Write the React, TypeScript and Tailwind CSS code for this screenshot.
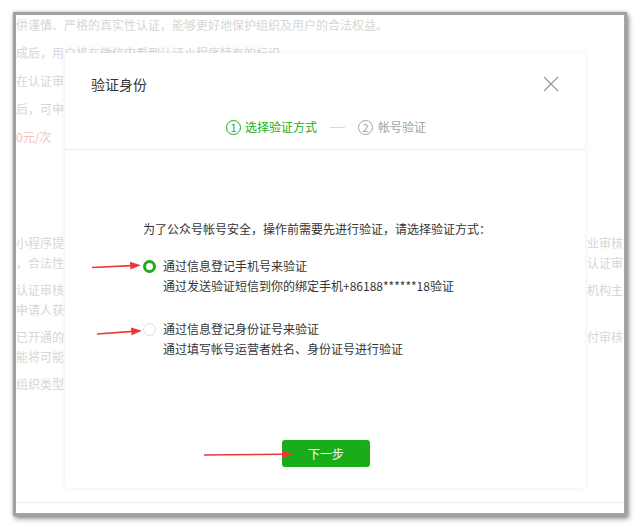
const faint = 'text-[#d6d6d6]'

function Radio({ checked }: { checked?: boolean }) {
  return checked ? (
    <span className="mt-[4px] box-border h-[13px] w-[13px] shrink-0 rounded-full border-[3px] border-[#1aad19] bg-white" />
  ) : (
    <span className="mt-[4px] box-border h-[13px] w-[13px] shrink-0 rounded-full border border-[#dcdcdc] bg-white" />
  )
}

function Arrows() {
  return (
    <svg className="pointer-events-none absolute left-0 top-0" width="640" height="527" viewBox="0 0 640 527">
      <g fill="#e8393a" stroke="#e8393a">
        <line x1="92" y1="267.5" x2="132" y2="265.6" strokeWidth="1.6" />
        <polygon points="141,265.2 130,261.8 130.4,269.4" stroke="none" />
        <line x1="97" y1="334" x2="133" y2="331.4" strokeWidth="1.6" />
        <polygon points="142,330.8 131,327.6 131.5,335.2" stroke="none" />
        <line x1="204" y1="455" x2="283" y2="454.3" strokeWidth="1.6" />
        <polygon points="293,454.2 282,450.4 282,458" stroke="none" />
      </g>
    </svg>
  )
}

export default function App() {
  return (
    <div className="relative h-[527px] w-[640px] overflow-hidden bg-white font-['Noto_Sans_CJK_SC',sans-serif] text-[12px]">
      <div className="ml-[13px] mt-[12px] h-[504px] w-[614px] border-[3px] border-[#a2a2a2] shadow-[0_0_3px_rgba(0,0,0,0.25),2px_3px_5px_rgba(0,0,0,0.4)]">
        <div className="relative h-full w-full overflow-hidden bg-white">
          {/* page behind the dialog */}
          <div className={`-mt-[4px] whitespace-nowrap ${faint}`}>
            <div className="h-[28px] leading-[28px]">供谨慎、严格的真实性认证，能够更好地保护组织及用户的合法权益。</div>
            <div className="h-[28px] leading-[28px]">成后，用户将在微信中看到认证小程序特有的标识。</div>
            <div className="h-[28px] leading-[28px]">在认证审核通过后，小程序将获得认证标识</div>
            <div className="h-[28px] leading-[28px]">后，可申请年审</div>
            <div className="h-[28px] leading-[28px] text-[#f4c2c2]">0元/次</div>
          </div>
          <div className={`mt-[82px] whitespace-nowrap ${faint}`}>
            {[
              ['小程序提供真实性、合法性认证', '业审核'],
              ['，合法性认证', '认证审'],
              ['认证审核机构主体', '机构主'],
              ['申请人获得认证', ''],
              ['已开通的支付审核', '付审核'],
              ['能将可能', ''],
              ['组织类型', ''],
            ].map(([l, r], i) => (
              <div key={i} className={`flex h-[20px] leading-[20px] ${i % 2 === 1 ? 'mb-[7px]' : ''}`}>
                <span className="w-[571px] shrink-0 overflow-hidden">{l}</span>
                <span>{r}</span>
              </div>
            ))}
          </div>
          <div className="mt-[108px] border-t border-[#ededed]" />

          {/* dialog */}
          <div className="absolute left-[49px] top-[38px] flex h-[435px] w-[520px] flex-col bg-white shadow-[0_0_6px_rgba(0,0,0,0.08)]">
            <div className="flex items-center justify-between px-[26px] pt-[22px]">
              <span className="h-[18px] text-[14px] leading-[18px] text-[#353535]">验证身份</span>
              <svg width="16" height="16" viewBox="0 0 16 16" className="text-[#999]">
                <path d="M1 1L15 15M15 1L1 15" stroke="currentColor" strokeWidth="1.2" />
              </svg>
            </div>
            <div className="mt-[24px] flex h-[20px] items-center justify-center pl-[2px] leading-[20px]">
              <span className="flex items-center gap-[4px] text-[#1aad19]">
                <span className="flex h-[15px] w-[15px] items-center justify-center rounded-full border border-[#1aad19] text-[11px] leading-none">1</span>
                选择验证方式
              </span>
              <span className="mx-[13px] h-px w-[15px] bg-[#d8d8d8]" />
              <span className="flex items-center gap-[5px] text-[#a3a3a3]">
                <span className="flex h-[15px] w-[15px] items-center justify-center rounded-full border border-[#a3a3a3] text-[11px] leading-none">2</span>
                帐号验证
              </span>
            </div>
            <div className="mt-[12px] border-t border-[#ececec]" />

            <div className="pl-[78px] text-[#353535]">
              <div className="mt-[69px] h-[20px] leading-[20px]">为了公众号帐号安全，操作前需要先进行验证，请选择验证方式：</div>
              <div className="mt-[17px] flex gap-[7px] leading-[20px]">
                <Radio checked />
                <div>
                  <div>通过信息登记手机号来验证</div>
                  <div>通过发送验证短信到你的绑定手机+86188******18验证</div>
                </div>
              </div>
              <div className="mt-[23px] flex gap-[7px] leading-[20px]">
                <Radio />
                <div>
                  <div>通过信息登记身份证号来验证</div>
                  <div>通过填写帐号运营者姓名、身份证号进行验证</div>
                </div>
              </div>
            </div>
            <div className="mt-[81px] flex justify-center pl-[2px]">
              <button type="button" className="h-[27px] w-[88px] rounded-[3px] bg-[#1aad19] text-[12px] text-white">
                下一步
              </button>
            </div>
          </div>
        </div>
      </div>
      <Arrows />
    </div>
  )
}
